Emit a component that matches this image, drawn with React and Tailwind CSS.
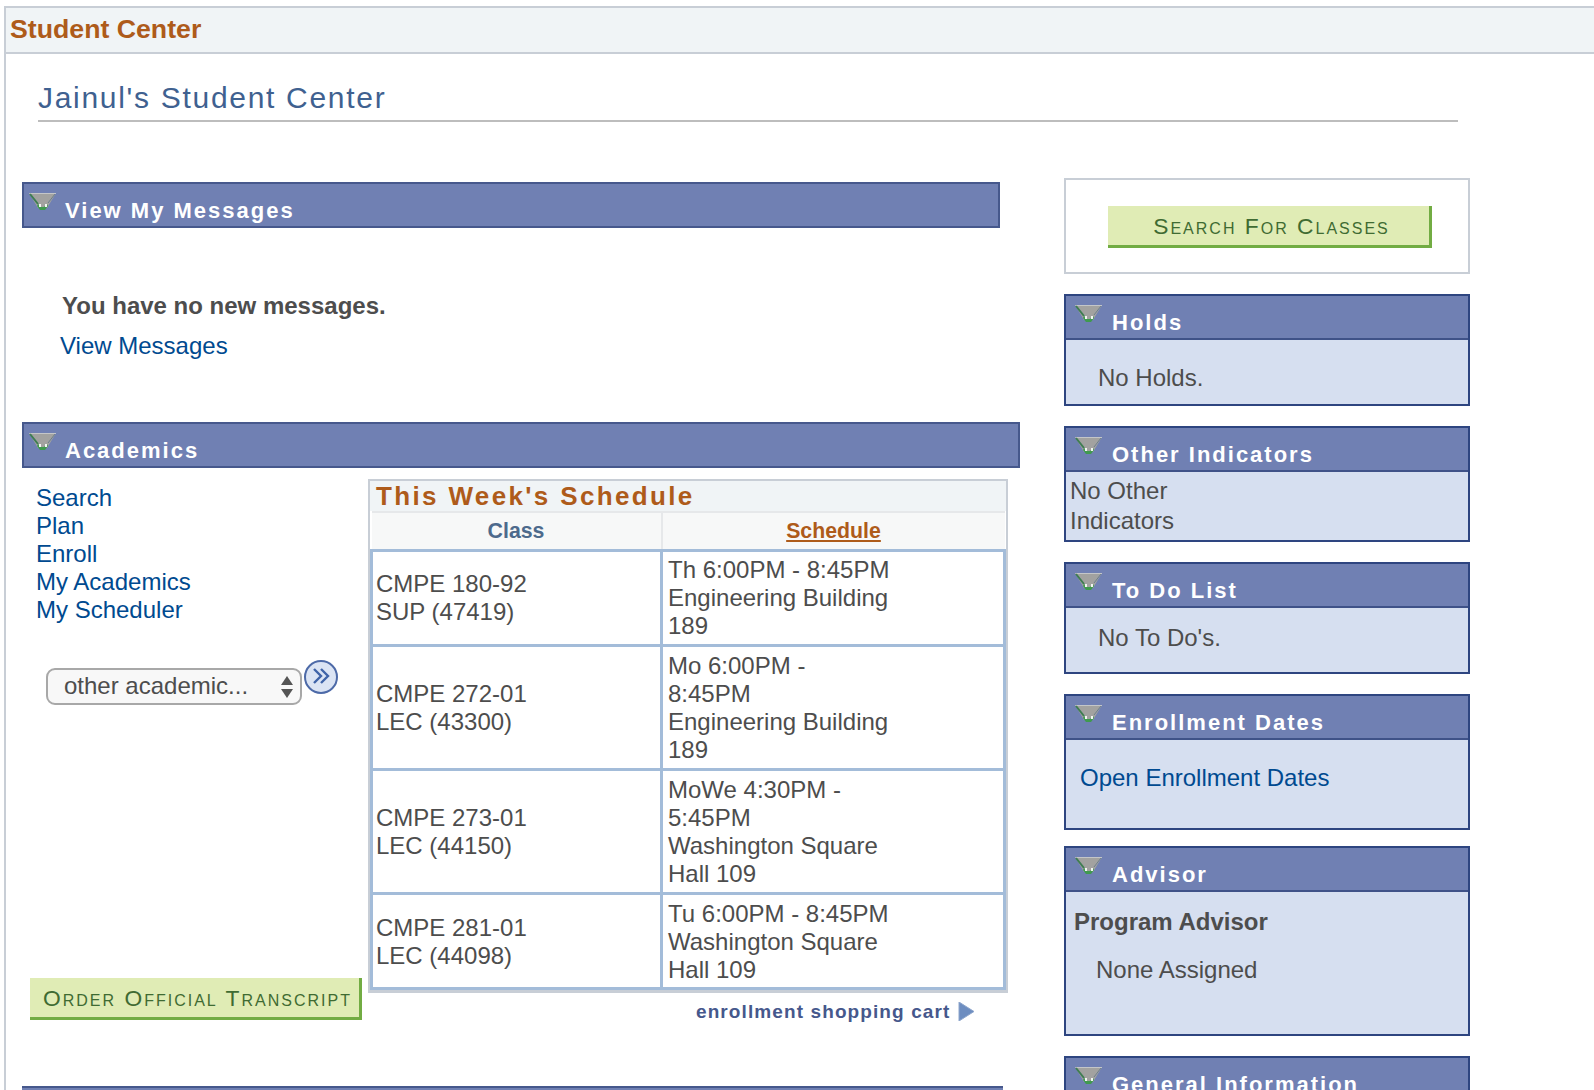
const font = { fontFamily: '"Liberation Sans", Arial, sans-serif' }

function Caret() {
  return (
    <svg width="28" height="18" viewBox="0 0 28 18" className="shrink-0">
      <polygon points="0,0 27,0 18,15 9,15" fill="#a2a2a0" />
      <polyline points="0.5,0.5 27,0.5" fill="none" stroke="#c4c6c8" strokeWidth="1" />
      <polyline points="1,1 9,11" fill="none" stroke="#3e7d52" strokeWidth="2" />
      <polyline points="26,1 19,10" fill="none" stroke="#6b7f8f" strokeWidth="1" />
      <polygon points="9,11 12,14 15,14 18,11 19,13 16,17 11,17 8,13" fill="#3f9a4e" />
      <rect x="10" y="11" width="2" height="3" fill="#f2f5f2" />
      <rect x="16" y="11" width="2" height="3" fill="#f2f5f2" />
    </svg>
  )
}

function SectionBar({ title, className }) {
  return (
    <div className={`flex h-[46px] border-2 border-[#46588c] bg-[#7080b3] pl-[5px] ${className}`}>
      <div className="mt-[9px]"><Caret /></div>
      <h2 className="ml-[8px] mt-[13px] text-[22px] leading-[28px] font-bold tracking-[2px] text-white">{title}</h2>
    </div>
  )
}

function Panel({ title, bodyClass, className = '', children }) {
  return (
    <section className={`border-2 border-[#2e4580] bg-[#d6dff0] ${className}`}>
      <div className="flex h-[44px] border-b-2 border-[#3f5288] bg-[#7080b3] pl-[9px]">
        <div className="mt-[9px]"><Caret /></div>
        <h3 className="ml-[9px] mt-[13px] text-[22px] leading-[28px] font-bold tracking-[2px] text-white">{title}</h3>
      </div>
      <div className={`text-[24px] text-[#4d4d4d] ${bodyClass}`}>{children}</div>
    </section>
  )
}

function GreenButton({ label, className }) {
  return (
    <button className={`block border-r-[3px] border-b-[3px] border-[#72ac43] bg-[#e0ecb5] pt-[2px] pl-[6px] text-center text-[22.8px] tracking-[2px] text-[#3f6b32] [font-variant:small-caps] ${className}`}>
      {label}
    </button>
  )
}

const rows = [
  { h: 'h-[95px]', pad: '', cls: ['CMPE 180-92', 'SUP (47419)'], when: ['Th 6:00PM - 8:45PM', 'Engineering Building', '189'] },
  { h: 'h-[124px]', pad: 'pt-[2px]', cls: ['CMPE 272-01', 'LEC (43300)'], when: ['Mo 6:00PM -', '8:45PM', 'Engineering Building', '189'] },
  { h: 'h-[124px]', pad: 'pt-[2px]', cls: ['CMPE 273-01', 'LEC (44150)'], when: ['MoWe 4:30PM -', '5:45PM', 'Washington Square', 'Hall 109'] },
  { h: 'h-[95px]', pad: 'pt-[2px]', cls: ['CMPE 281-01', 'LEC (44098)'], when: ['Tu 6:00PM - 8:45PM', 'Washington Square', 'Hall 109'] },
]

function Schedule() {
  return (
    <div className="w-[640px] border-2 border-b-[3px] border-[#c8ced6] bg-white">
      <h3 className="h-[30px] bg-[#f0f4f6] pl-[6px] text-[26px] leading-[30px] font-bold tracking-[2.35px] text-[#ae5b1a]">This Week's Schedule</h3>
      <table className="w-full table-fixed border-collapse text-[24px] leading-[28px] text-[#4d4d4d]">
        <colgroup>
          <col className="w-[290px]" />
          <col />
        </colgroup>
        <thead>
          <tr className="h-[38px] border-y-2 border-[#e6e8ea] bg-[#f7f8f8] text-[21.3px] font-bold">
            <th className="border-r-2 border-[#e6e8ea] text-[#4d6a8c]">Class</th>
            <th className="text-[#ae5b1a] underline">Schedule</th>
          </tr>
        </thead>
        <tbody>
          {rows.map((r) => (
            <tr key={r.cls[0]} className={r.h}>
              <td className={`border-[3px] border-[#a3bcd9] pl-[3px] ${r.pad}`}>
                {r.cls.map((l) => <div key={l}>{l}</div>)}
              </td>
              <td className={`border-[3px] border-[#a3bcd9] pl-[5px] ${r.pad}`}>
                {r.when.map((l, i) => <div key={i} className="whitespace-nowrap">{l}</div>)}
              </td>
            </tr>
          ))}
        </tbody>
      </table>
    </div>
  )
}

function GoButton() {
  return (
    <svg width="36" height="36" viewBox="0 0 36 36" className="ml-[1px] mt-[2px] shrink-0">
      <circle cx="18" cy="18" r="16" fill="#dbe4f4" stroke="#4d6aa8" strokeWidth="2" />
      <polyline points="11,10 18,17 11,24" fill="none" stroke="#3f63a8" strokeWidth="2.4" />
      <polyline points="18,10 25,17 18,24" fill="none" stroke="#3f63a8" strokeWidth="2.4" />
    </svg>
  )
}

export default function App() {
  return (
    <div style={font} className="h-[1090px] overflow-hidden bg-white pt-[6px] pl-[4px] text-[#4d4d4d]">
      <div className="h-full border-t-2 border-l-2 border-[#c8ced6]">
        <div className="h-[46px] border-b-2 border-[#c8ced6] bg-[#f0f4f6] pl-[4px] text-[26.7px] leading-[42px] font-bold text-[#ae5b1a]">Student Center</div>

        <div className="ml-[32px] mt-[27px] w-[1420px] border-b-2 border-[#bdbdbd] pb-[5px] text-[30px] leading-[34px] tracking-[1.7px] text-[#3f6190]">Jainul's Student Center</div>

        <div className="flex pl-[16px]">
          <div className="w-[998px] pt-[60px]">
            <SectionBar title="View My Messages" className="w-[978px]" />
            <p className="ml-[40px] mt-[64px] text-[24px] leading-[28px] font-bold">You have no new messages.</p>
            <a className="ml-[38px] mt-[12px] block text-[24px] leading-[28px] text-[#004a90]">View Messages</a>

            <SectionBar title="Academics" className="mt-[62px]" />
            <div className="flex">
              <div className="w-[346px]">
                <nav className="ml-[14px] mt-[16px] flex flex-col text-[24px] leading-[28px] text-[#004a90]">
                  <a>Search</a>
                  <a>Plan</a>
                  <a>Enroll</a>
                  <a>My Academics</a>
                  <a>My Scheduler</a>
                </nav>
                <div className="ml-[24px] mt-[33px] flex h-[50px] items-start">
                  <div className="relative mt-[11px] h-[37px] w-[256px] rounded-[9px] border-2 border-[#a8a8a8] bg-[#f8f8f8]">
                    <select className="-mt-[2px] block h-[29px] w-full appearance-none bg-transparent pl-[16px] text-[24px] text-[#4d4d4d]">
                      <option>other academic...</option>
                    </select>
                    <svg width="12" height="24" viewBox="0 0 12 24" className="absolute right-[7px] top-[5px]">
                      <polygon points="6,1 12,10 0,10" fill="#555" />
                      <polygon points="0,14 12,14 6,23" fill="#555" />
                    </svg>
                  </div>
                  <GoButton />
                </div>
                <GreenButton label="Order Official Transcript" className="ml-[8px] mt-[271px] h-[42px] w-[332px]" />
              </div>
              <div className="mt-[11px]">
                <Schedule />
                <a className="ml-[328px] mt-[7px] flex items-center text-[19px] leading-[24px] font-bold tracking-[1.1px] text-[#46588c]">
                  enrollment shopping cart
                  <svg width="17" height="19" viewBox="0 0 17 19" className="ml-[8px]">
                    <polygon points="1,0 16,9.5 1,19" fill="#6d8dc0" stroke="#8ea6cc" strokeWidth="1" />
                  </svg>
                </a>
              </div>
            </div>
            <div className="mt-[62px] h-[4px] w-[981px] border-t-2 border-[#46588c] bg-[#7080b3]" />
          </div>

          <aside className="ml-[44px] flex w-[406px] flex-col gap-[20px] pt-[56px] pb-[40px]">
            <div className="flex h-[96px] items-center justify-center border-2 border-[#c8ced6] pt-[2px] pl-[6px]">
              <GreenButton label="Search For Classes" className="h-[42px] w-[324px]" />
            </div>
            <Panel title="Holds" bodyClass="h-[64px] pl-[32px] pt-[24px] leading-[28px]">No Holds.</Panel>
            <Panel title="Other Indicators" bodyClass="h-[68px] pl-[4px] pt-[4px] leading-[30px]">
              <div className="w-[160px]">No Other Indicators</div>
            </Panel>
            <Panel title="To Do List" bodyClass="h-[64px] pl-[32px] pt-[16px] leading-[28px]">No To Do's.</Panel>
            <Panel title="Enrollment Dates" bodyClass="h-[88px] pl-[14px] pt-[24px] leading-[28px]">
              <a className="text-[#004a90]">Open Enrollment Dates</a>
            </Panel>
            <Panel title="Advisor" className="-mt-[4px]" bodyClass="h-[142px] pt-[16px] leading-[28px]">
              <div className="pl-[8px] font-bold">Program Advisor</div>
              <div className="mt-[20px] pl-[30px]">None Assigned</div>
            </Panel>
            <Panel title="General Information" bodyClass="h-[60px]" />
          </aside>
        </div>
      </div>
    </div>
  )
}
